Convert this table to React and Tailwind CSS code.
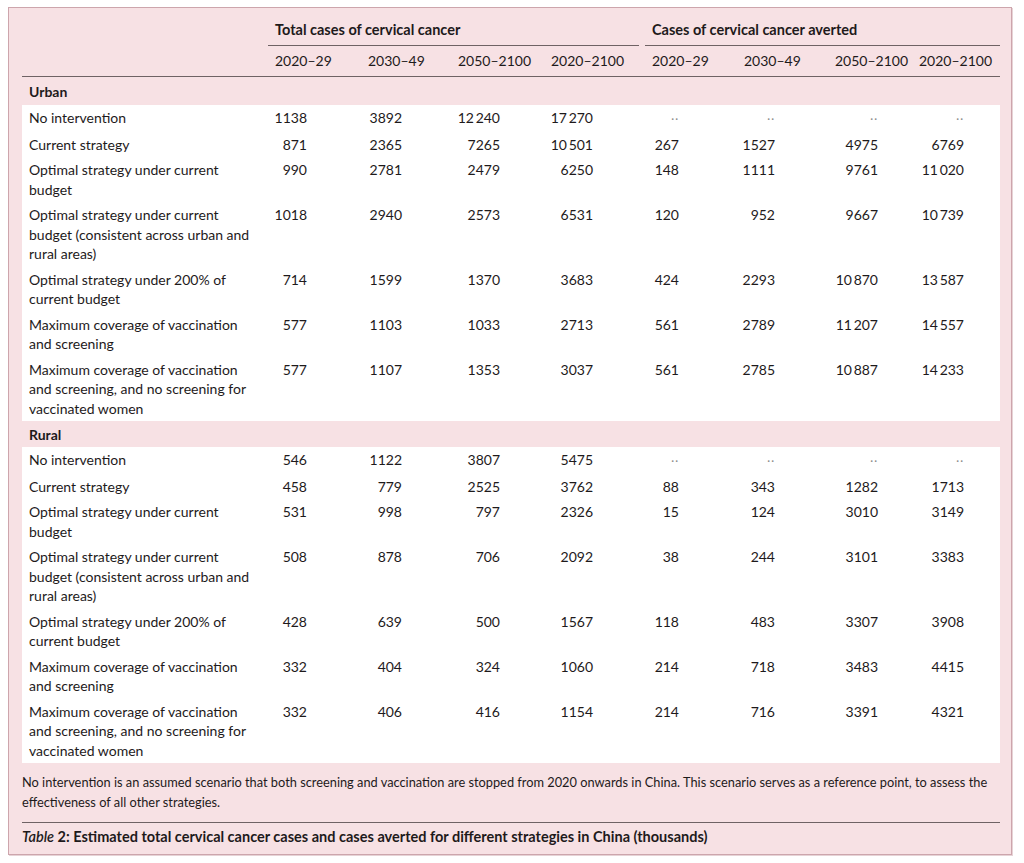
import React from 'react';

// thin space used as thousands separator in the journal layout
const T = '\u2009';

const COLS = 'grid grid-cols-[246px_93px_90px_93px_101px_92px_91px_84px_88px]';

// right padding per numeric column so figures line up on the right
const PAD = ['pr-[54px]', 'pr-[49px]', 'pr-[44px]', 'pr-[52px]', 'pr-[58px]', 'pr-[53px]', 'pr-[34px]', 'pr-[36px]'];

const YEARS = ['2020–29', '2030–49', '2050–2100', '2020–2100', '2020–29', '2030–49', '2050–2100', '2020–2100'];

const urban = [
  { label: ['No intervention'], values: ['1138', '3892', `12${T}240`, `17${T}270`, null, null, null, null] },
  { label: ['Current strategy'], values: ['871', '2365', '7265', `10${T}501`, '267', '1527', '4975', '6769'] },
  { label: ['Optimal strategy under current', 'budget'], values: ['990', '2781', '2479', '6250', '148', '1111', '9761', `11${T}020`] },
  {
    label: ['Optimal strategy under current', 'budget (consistent across urban and', 'rural areas)'],
    values: ['1018', '2940', '2573', '6531', '120', '952', '9667', `10${T}739`],
  },
  { label: ['Optimal strategy under 200% of', 'current budget'], values: ['714', '1599', '1370', '3683', '424', '2293', `10${T}870`, `13${T}587`] },
  { label: ['Maximum coverage of vaccination', 'and screening'], values: ['577', '1103', '1033', '2713', '561', '2789', `11${T}207`, `14${T}557`] },
  {
    label: ['Maximum coverage of vaccination', 'and screening, and no screening for', 'vaccinated women'],
    values: ['577', '1107', '1353', '3037', '561', '2785', `10${T}887`, `14${T}233`],
  },
];

const rural = [
  { label: ['No intervention'], values: ['546', '1122', '3807', '5475', null, null, null, null] },
  { label: ['Current strategy'], values: ['458', '779', '2525', '3762', '88', '343', '1282', '1713'] },
  { label: ['Optimal strategy under current', 'budget'], values: ['531', '998', '797', '2326', '15', '124', '3010', '3149'] },
  {
    label: ['Optimal strategy under current', 'budget (consistent across urban and', 'rural areas)'],
    values: ['508', '878', '706', '2092', '38', '244', '3101', '3383'],
  },
  { label: ['Optimal strategy under 200% of', 'current budget'], values: ['428', '639', '500', '1567', '118', '483', '3307', '3908'] },
  { label: ['Maximum coverage of vaccination', 'and screening'], values: ['332', '404', '324', '1060', '214', '718', '3483', '4415'] },
  {
    label: ['Maximum coverage of vaccination', 'and screening, and no screening for', 'vaccinated women'],
    values: ['332', '406', '416', '1154', '214', '716', '3391', '4321'],
  },
];

function DataRow({ row }) {
  return (
    <div className={`${COLS} py-[3px] leading-[19.5px]`}>
      <div className="pl-[7px] whitespace-nowrap">
        {row.label.map((line, i) => (
          <div key={i}>{line}</div>
        ))}
      </div>
      {row.values.map((v, i) => (
        <div key={i} className={`text-right ${PAD[i]}`}>
          {v === null ? <span className="text-[11px] text-[#8a8a8a] tracking-[1px]">··</span> : v}
        </div>
      ))}
    </div>
  );
}

function Section({ title, rows, band }) {
  return (
    <>
      <div className={`${band} flex items-center pl-[7px] font-bold`}>{title}</div>
      <div className="bg-white">
        {rows.map((r, i) => (
          <DataRow key={i} row={r} />
        ))}
      </div>
    </>
  );
}

export default function App() {
  return (
    <div className="bg-white min-h-[863px] pt-[7px] pl-[8px] font-['Lato','Noto_Sans',sans-serif] text-[14px] text-[#1e1a1b]">
      <div className="w-[1004px] border border-[#cda5ac] bg-[#f7e1e4] pl-[13px] pr-[11px] shadow-[1px_1px_0_#e6d3d6]">
        {/* group headings */}
        <div className={COLS}>
          <div />
          <div className="col-span-4 mr-[6px] border-b border-[#6f6264] pt-[12px] pb-[5px] pl-[7px] leading-[20px] text-[14.5px] font-bold">
            Total cases of cervical cancer
          </div>
          <div className="col-span-4 border-b border-[#6f6264] pt-[12px] pb-[5px] pl-[7px] leading-[20px] text-[14.5px] font-bold">
            Cases of cervical cancer averted
          </div>
        </div>

        {/* year ranges */}
        <div className={`${COLS} border-b border-[#6f6264] pt-[5px] pb-[5px] leading-[20px]`}>
          <div />
          {YEARS.map((y, i) => (
            <div key={i} className="pl-[7px] whitespace-nowrap">
              {y}
            </div>
          ))}
        </div>

        <Section title="Urban" rows={urban} band="h-[28px]" />
        <Section title="Rural" rows={rural} band="h-[26px]" />

        <p className="pt-[9px] text-[12.8px] leading-[20px] whitespace-nowrap">
          No intervention is an assumed scenario that both screening and vaccination are stopped from 2020 onwards in China. This scenario serves as a reference point, to assess the
          <br />
          effectiveness of all other strategies.
        </p>

        <div className="mt-[10px] border-t border-[#6f6264] pt-[4px] pb-[7px] leading-[20px] text-[14.5px] font-bold">
          <i className="font-semibold">Table</i> 2: Estimated total cervical cancer cases and cases averted for different strategies in China (thousands)
        </div>
      </div>
    </div>
  );
}
